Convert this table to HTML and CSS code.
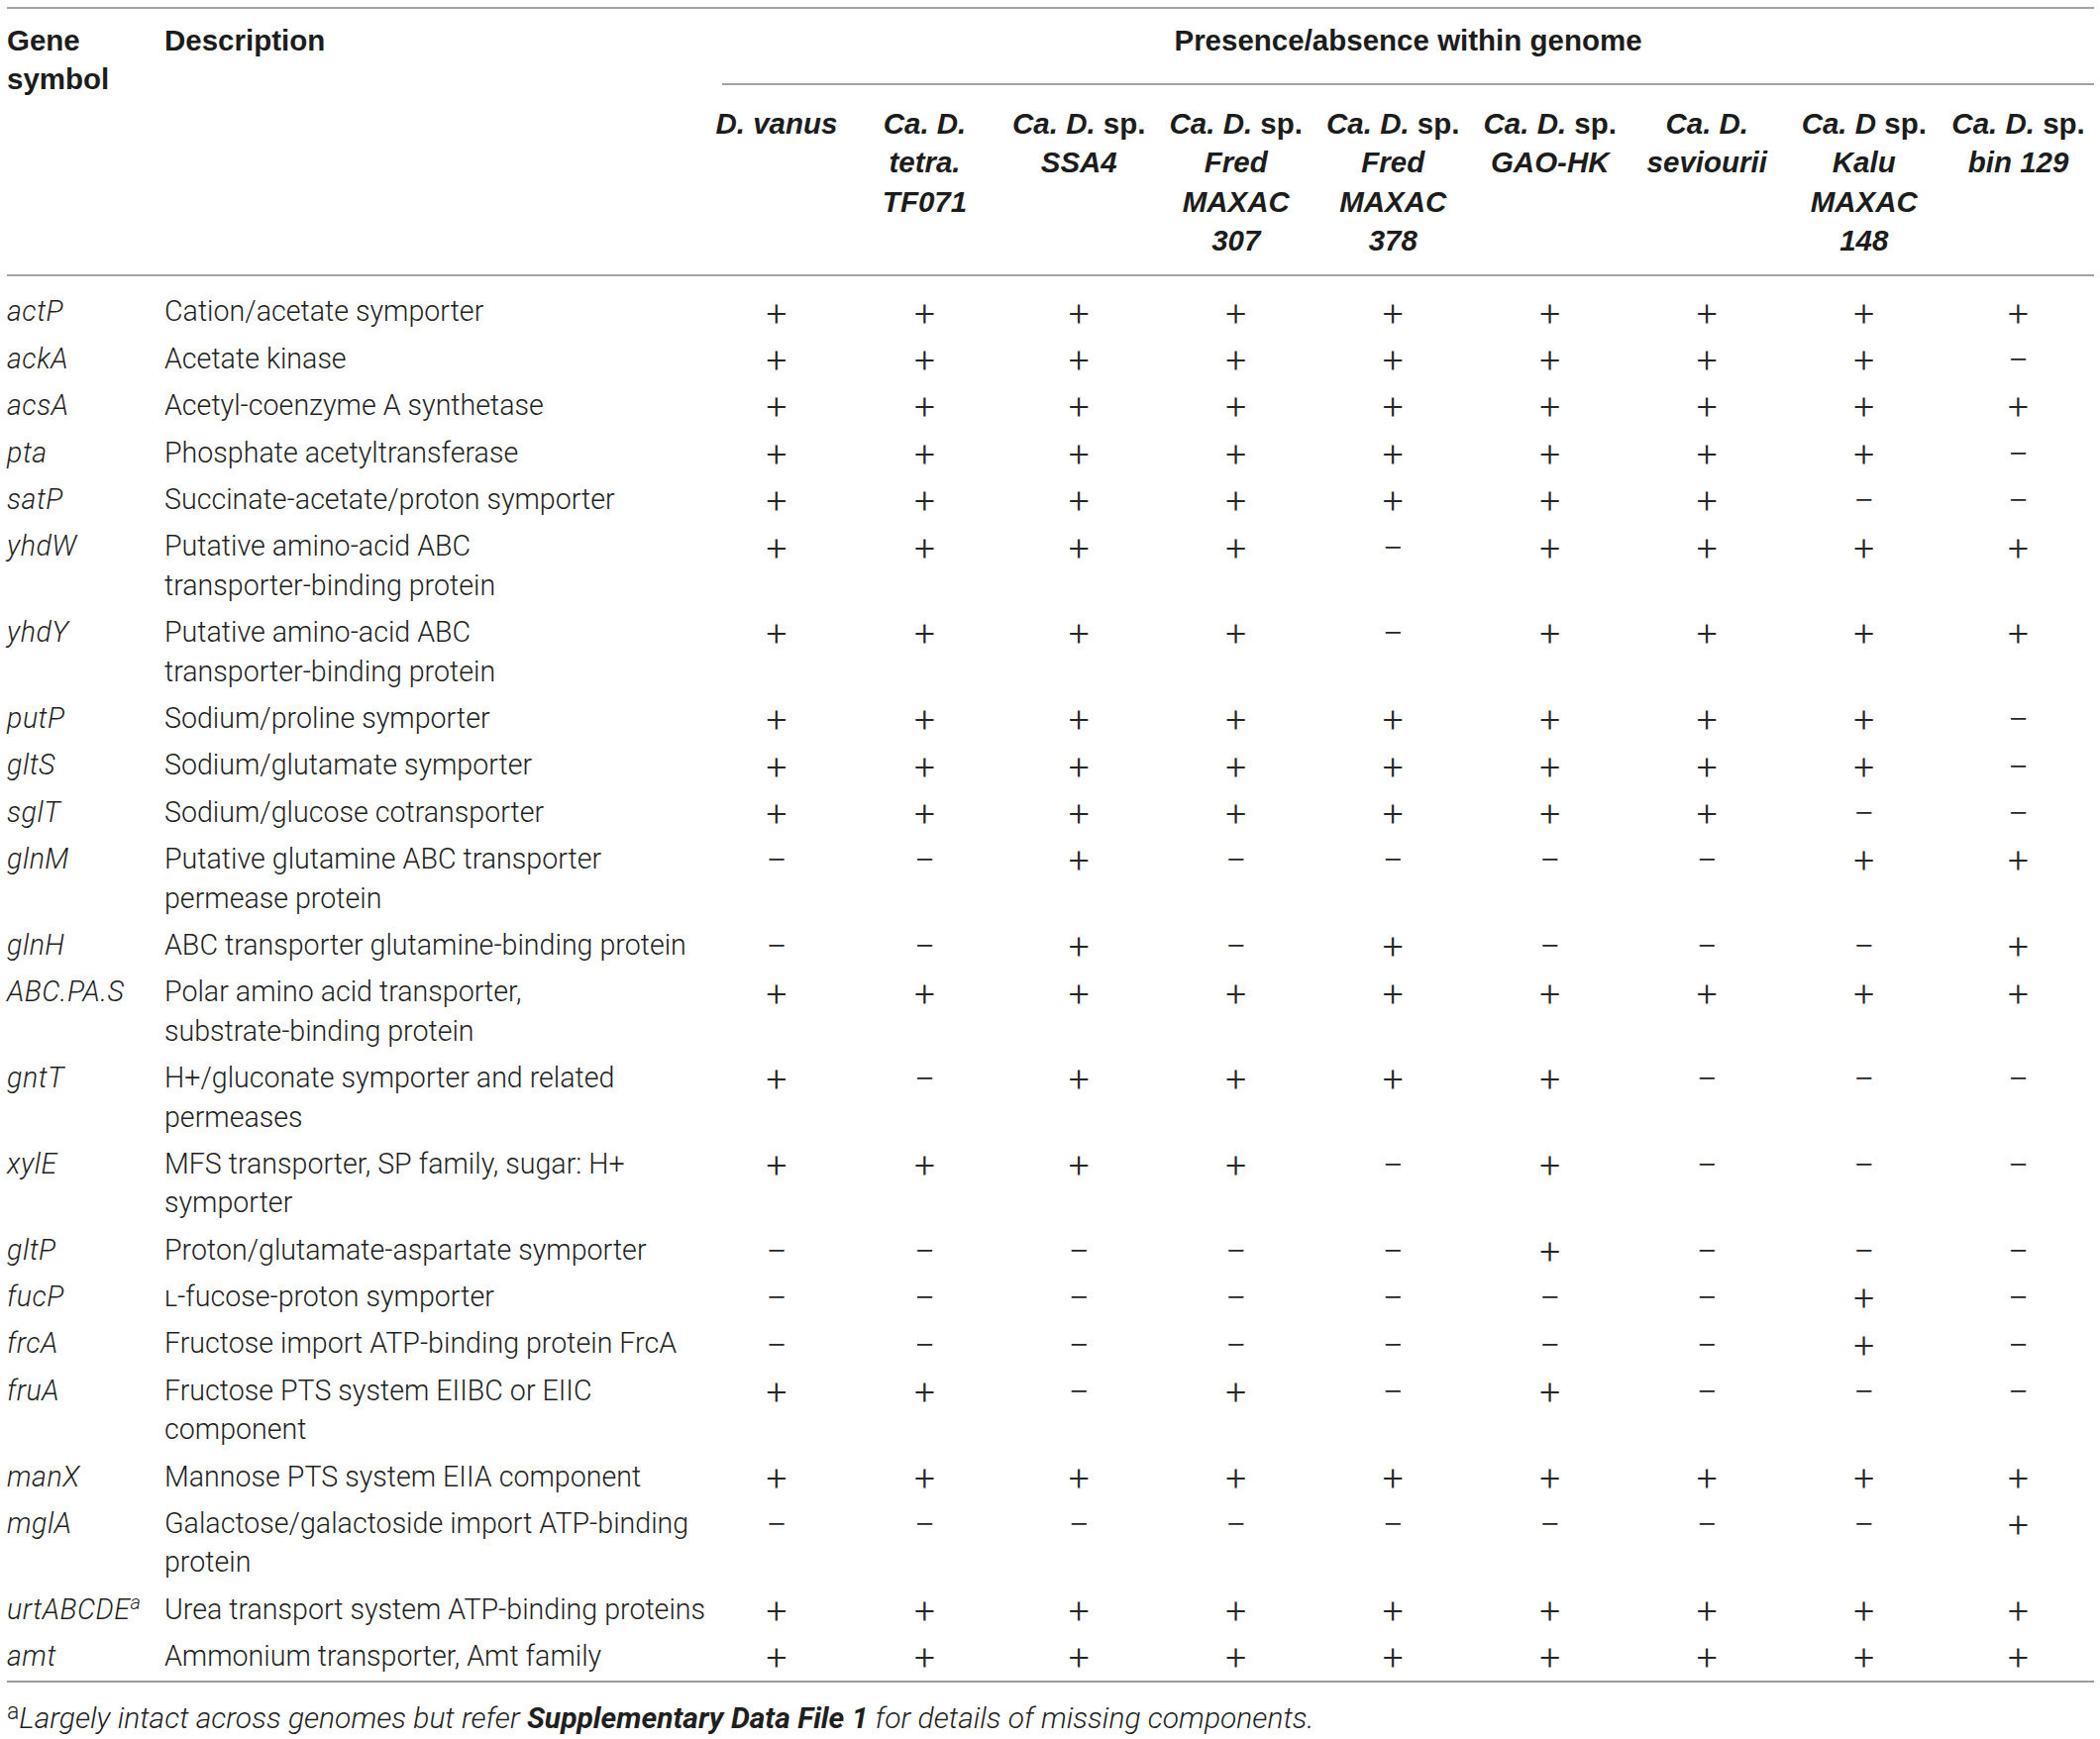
FILE: index.html
```html
<!DOCTYPE html>
<html>
<head>
<meta charset="utf-8">
<link rel="stylesheet" href="styles.css">
</head>
<body>
<div class="page">
<table class="gene-table">
<colgroup>
<col class="c-gene"><col class="c-desc"><col class="c-sp1"><col class="c-sp2"><col class="c-sp"><col class="c-sp"><col class="c-sp"><col class="c-sp"><col class="c-sp"><col class="c-sp"><col class="c-sp9">
</colgroup>
<thead>
<tr class="h1">
<th rowspan="2" class="th-gene">Gene<br>symbol</th>
<th rowspan="2" class="th-desc">Description</th>
<th colspan="9" class="th-pres"><div class="pres-label">Presence/absence within genome</div></th>
</tr>
<tr class="h2">
<th class="sp"><i>D. vanus</i></th>
<th class="sp"><i>Ca. D.<br>tetra.<br>TF071</i></th>
<th class="sp"><i>Ca. D.</i> sp.<br><i>SSA4</i></th>
<th class="sp"><i>Ca. D.</i> sp.<br><i>Fred<br>MAXAC<br>307</i></th>
<th class="sp"><i>Ca. D.</i> sp.<br><i>Fred<br>MAXAC<br>378</i></th>
<th class="sp"><i>Ca. D.</i> sp.<br><i>GAO-HK</i></th>
<th class="sp"><i>Ca. D.<br>seviourii</i></th>
<th class="sp"><i>Ca. D</i> sp.<br><i>Kalu<br>MAXAC<br>148</i></th>
<th class="sp"><i>Ca. D.</i> sp.<br><i>bin 129</i></th>
</tr>
</thead>
<tbody>
<tr class="first"><td class="g">actP</td><td class="d">Cation/acetate symporter</td><td>+</td><td>+</td><td>+</td><td>+</td><td>+</td><td>+</td><td>+</td><td>+</td><td>+</td></tr>
<tr><td class="g">ackA</td><td class="d">Acetate kinase</td><td>+</td><td>+</td><td>+</td><td>+</td><td>+</td><td>+</td><td>+</td><td>+</td><td>−</td></tr>
<tr><td class="g">acsA</td><td class="d">Acetyl-coenzyme A synthetase</td><td>+</td><td>+</td><td>+</td><td>+</td><td>+</td><td>+</td><td>+</td><td>+</td><td>+</td></tr>
<tr><td class="g">pta</td><td class="d">Phosphate acetyltransferase</td><td>+</td><td>+</td><td>+</td><td>+</td><td>+</td><td>+</td><td>+</td><td>+</td><td>−</td></tr>
<tr><td class="g">satP</td><td class="d">Succinate-acetate/proton symporter</td><td>+</td><td>+</td><td>+</td><td>+</td><td>+</td><td>+</td><td>+</td><td>−</td><td>−</td></tr>
<tr><td class="g">yhdW</td><td class="d">Putative amino-acid ABC<br>transporter-binding protein</td><td>+</td><td>+</td><td>+</td><td>+</td><td>−</td><td>+</td><td>+</td><td>+</td><td>+</td></tr>
<tr><td class="g">yhdY</td><td class="d">Putative amino-acid ABC<br>transporter-binding protein</td><td>+</td><td>+</td><td>+</td><td>+</td><td>−</td><td>+</td><td>+</td><td>+</td><td>+</td></tr>
<tr><td class="g">putP</td><td class="d">Sodium/proline symporter</td><td>+</td><td>+</td><td>+</td><td>+</td><td>+</td><td>+</td><td>+</td><td>+</td><td>−</td></tr>
<tr><td class="g">gltS</td><td class="d">Sodium/glutamate symporter</td><td>+</td><td>+</td><td>+</td><td>+</td><td>+</td><td>+</td><td>+</td><td>+</td><td>−</td></tr>
<tr><td class="g">sglT</td><td class="d">Sodium/glucose cotransporter</td><td>+</td><td>+</td><td>+</td><td>+</td><td>+</td><td>+</td><td>+</td><td>−</td><td>−</td></tr>
<tr><td class="g">glnM</td><td class="d">Putative glutamine ABC transporter<br>permease protein</td><td>−</td><td>−</td><td>+</td><td>−</td><td>−</td><td>−</td><td>−</td><td>+</td><td>+</td></tr>
<tr><td class="g">glnH</td><td class="d">ABC transporter glutamine-binding protein</td><td>−</td><td>−</td><td>+</td><td>−</td><td>+</td><td>−</td><td>−</td><td>−</td><td>+</td></tr>
<tr><td class="g">ABC.PA.S</td><td class="d">Polar amino acid transporter,<br>substrate-binding protein</td><td>+</td><td>+</td><td>+</td><td>+</td><td>+</td><td>+</td><td>+</td><td>+</td><td>+</td></tr>
<tr><td class="g">gntT</td><td class="d">H+/gluconate symporter and related<br>permeases</td><td>+</td><td>−</td><td>+</td><td>+</td><td>+</td><td>+</td><td>−</td><td>−</td><td>−</td></tr>
<tr><td class="g">xylE</td><td class="d">MFS transporter, SP family, sugar: H+<br>symporter</td><td>+</td><td>+</td><td>+</td><td>+</td><td>−</td><td>+</td><td>−</td><td>−</td><td>−</td></tr>
<tr><td class="g">gltP</td><td class="d">Proton/glutamate-aspartate symporter</td><td>−</td><td>−</td><td>−</td><td>−</td><td>−</td><td>+</td><td>−</td><td>−</td><td>−</td></tr>
<tr><td class="g">fucP</td><td class="d"><span class="sc">l</span>-fucose-proton symporter</td><td>−</td><td>−</td><td>−</td><td>−</td><td>−</td><td>−</td><td>−</td><td>+</td><td>−</td></tr>
<tr><td class="g">frcA</td><td class="d">Fructose import ATP-binding protein FrcA</td><td>−</td><td>−</td><td>−</td><td>−</td><td>−</td><td>−</td><td>−</td><td>+</td><td>−</td></tr>
<tr><td class="g">fruA</td><td class="d">Fructose PTS system EIIBC or EIIC<br>component</td><td>+</td><td>+</td><td>−</td><td>+</td><td>−</td><td>+</td><td>−</td><td>−</td><td>−</td></tr>
<tr><td class="g">manX</td><td class="d">Mannose PTS system EIIA component</td><td>+</td><td>+</td><td>+</td><td>+</td><td>+</td><td>+</td><td>+</td><td>+</td><td>+</td></tr>
<tr><td class="g">mglA</td><td class="d">Galactose/galactoside import ATP-binding<br>protein</td><td>−</td><td>−</td><td>−</td><td>−</td><td>−</td><td>−</td><td>−</td><td>−</td><td>+</td></tr>
<tr><td class="g">urtABCDE<sup class="sup-i">a</sup></td><td class="d">Urea transport system ATP-binding proteins</td><td>+</td><td>+</td><td>+</td><td>+</td><td>+</td><td>+</td><td>+</td><td>+</td><td>+</td></tr>
<tr class="last"><td class="g">amt</td><td class="d">Ammonium transporter, Amt family</td><td>+</td><td>+</td><td>+</td><td>+</td><td>+</td><td>+</td><td>+</td><td>+</td><td>+</td></tr>
</tbody>
</table>
<p class="footnote"><sup class="fn-mark">a</sup><i>Largely intact across genomes but refer <b>Supplementary Data File 1</b> for details of missing components.</i></p>
</div>
</body>
</html>
```

FILE: styles.css
```css
html, body {
  margin: 0;
  padding: 0;
  background: #ffffff;
}

.page {
  padding: 7px 7px 0 7px;
  font-family: Roboto, "Liberation Sans", Arial, sans-serif;
  font-weight: 300;
  color: #1f1f1f;
  font-size: 28.6px;
}

.gene-table {
  border-collapse: collapse;
  table-layout: fixed;
  width: 2106px;
  line-height: 39.4px;
}

.c-gene { width: 159px; }
.c-desc { width: 545px; }
.c-sp1 { width: 146px; }
.c-sp2 { width: 153px; }
.c-sp { width: 158.5px; }
.c-sp9 { width: 153px; }

.gene-table thead {
  border-top: 2px solid #a3a3a3;
  border-bottom: 2px solid #a3a3a3;
}

.gene-table th {
  font-family: "Liberation Sans", Arial, sans-serif;
  font-weight: bold;
  font-size: 29.5px;
  color: #1c1c1c;
  vertical-align: top;
  padding: 0;
  white-space: nowrap;
  line-height: 39.2px;
}

.th-gene {
  text-align: left;
  padding-top: 12px !important;
}

.th-desc {
  text-align: left;
  padding-top: 12px !important;
}

.th-pres {
  padding-top: 12px !important;
  padding-left: 18px !important;
  text-align: center;
}

.pres-label {
  padding-bottom: 24px;
  border-bottom: 2px solid #a3a3a3;
}

.h2 .sp {
  text-align: center;
  padding-top: 19px;
  padding-bottom: 15px;
}

/* presence / absence marks */
.gene-table td {
  padding: 6.6px 0 1.4px 0;
  vertical-align: top;
  text-align: center;
  white-space: nowrap;
  font-size: 37px;
  color: #262626;
}

.gene-table tr.first td {
  padding-top: 17.6px;
}

.gene-table tr.last td {
  padding-bottom: 3.4px;
}

/* text cells */
.gene-table td.g,
.gene-table td.d {
  text-align: left;
  font-size: 28.6px;
  color: #1f1f1f;
  padding: 5.4px 0 2.6px 0;
}

.gene-table tr.first td.g,
.gene-table tr.first td.d {
  padding-top: 16.4px;
}

.gene-table tr.last td.g,
.gene-table tr.last td.d {
  padding-bottom: 4.6px;
}

.gene-table td.g {
  font-style: italic;
  letter-spacing: 0.5px;
}

.gene-table tbody {
  border-bottom: 2px solid #9a9a9a;
}

.sc {
  font-variant: small-caps;
}

.sup-i {
  font-size: 20px;
  line-height: 0;
  vertical-align: 10px;
  letter-spacing: 0;
}

.footnote {
  margin: 16px 0 0 0;
  line-height: 39px;
  font-size: 30px;
}

.fn-mark {
  font-size: 23px;
  line-height: 0;
  vertical-align: 9px;
}

.footnote b {
  font-weight: bold;
}
```
